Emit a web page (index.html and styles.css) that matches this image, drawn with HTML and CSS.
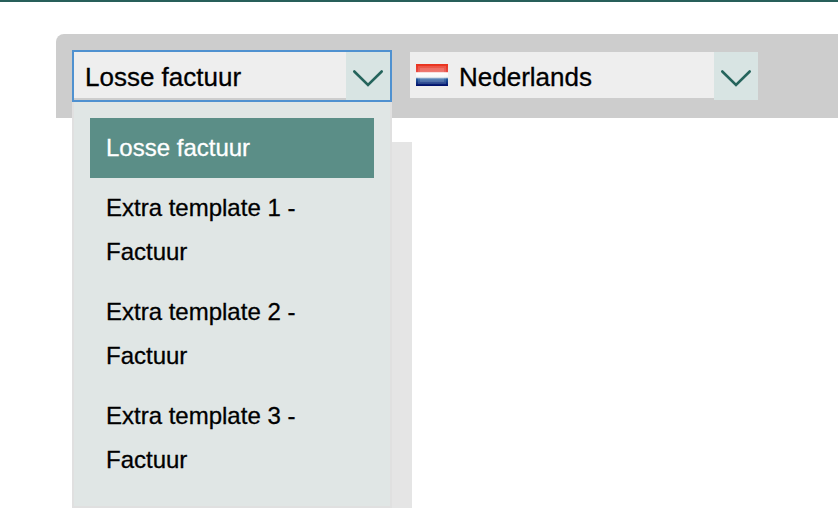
FILE: index.html
```html
<!DOCTYPE html>
<html lang="nl">
<head>
  <meta charset="utf-8">
  <title>Losse factuur</title>
  <link rel="stylesheet" href="styles.css">
</head>
<body>
  <div class="toolbar">
    <div class="select open">
      <div class="select-value">Losse factuur</div>
      <div class="select-arrow">
        <svg width="32" height="20" viewBox="0 0 32 20"><path d="M2.3 3.5 L16 17 L29.7 3.5"/></svg>
      </div>
      <ul class="options">
        <li class="selected">Losse factuur</li>
        <li>Extra template 1 - Factuur</li>
        <li>Extra template 2 - Factuur</li>
        <li>Extra template 3 - Factuur</li>
      </ul>
    </div>
    <div class="select language">
      <div class="select-value">
        <svg class="flag" width="32" height="22" viewBox="0 0 32 22">
          <defs>
            <linearGradient id="stripes" x2="0" y2="1">
              <stop offset="0" stop-color="#ea321c"/>
              <stop offset=".34" stop-color="#e8483f"/>
              <stop offset=".4" stop-color="#fff"/>
              <stop offset=".6" stop-color="#f4f4f4"/>
              <stop offset=".68" stop-color="#205a9f"/>
              <stop offset="1" stop-color="#000c68"/>
            </linearGradient>
          </defs>
          <rect width="32" height="22" fill="url(#stripes)"/>
          <rect x="2" y="2" width="28" height="18" fill="#fff" opacity=".14"/>
          <rect x="4" y="4" width="24" height="14" fill="#fff" opacity=".13"/>
        </svg>
        Nederlands
      </div>
      <div class="select-arrow">
        <svg width="32" height="20" viewBox="0 0 32 20"><path d="M2.3 3.5 L16 17 L29.7 3.5"/></svg>
      </div>
    </div>
  </div>
</body>
</html>
```

FILE: styles.css
```css
* { box-sizing: border-box; }
html, body { height: 100%; }
body { margin: 0; padding: 32px 0 0 56px; border-top: 2px solid #285f5a; background: #fff; color: #000; font-family: "Liberation Sans", Arial, sans-serif; -webkit-text-stroke: .3px; overflow: hidden; }
.toolbar { display: flex; align-items: flex-start; gap: 16px; height: 84px; padding: 16px; background: #cdcdcd; border-top-left-radius: 8px; }
.select { position: relative; display: flex; width: 320px; height: 52px; border: 2px solid transparent; font-size: 26px; }
.select.open { border-color: #4f91d0; }
.select.language { width: 352px; }
.select-value { flex: 1; display: flex; align-items: center; height: 46px; padding: 4px 0 0 11px; background: #eee; }
.language .select-value { gap: 11px; padding-left: 6px; }
.flag { margin-top: -4px; }
.select-arrow { display: flex; align-items: center; justify-content: center; width: 44px; height: 48px; padding-top: 4px; background: #d8e4e3; }
.select-arrow path { fill: none; stroke: #25645c; stroke-width: 2.6; stroke-linecap: round; }
.options { position: absolute; top: 50px; left: -2px; width: 320px; height: 406px; margin: 0; padding: 16px 16px 16px; list-style: none; background: #e0e6e5; border: 2px solid #e0e0e0; border-top: 0; box-shadow: 20px 40px 0 #e5e5e5; font-size: 24px; line-height: 44px; }
.options li { padding: 8px 16px; }
.options .selected { background: #5b8e87; color: #fff; }
```
